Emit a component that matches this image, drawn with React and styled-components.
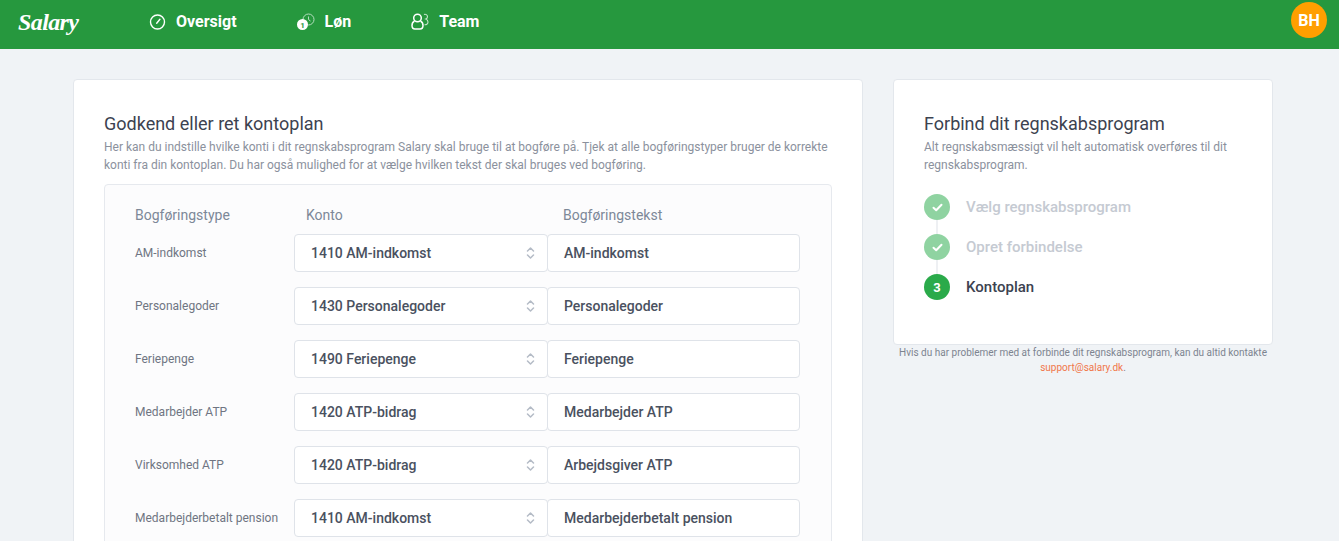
import React from 'react';
import styled, { createGlobalStyle } from 'styled-components';

const GlobalStyle = createGlobalStyle`
  html, body {
    margin: 0;
    height: 541px;
    overflow: hidden;
    background: #f0f3f6;
    font-family: Roboto, "Liberation Sans", sans-serif;
    color: #363c4a;
  }
  * { box-sizing: border-box; }
`;

const TopBar = styled.header`
  height: 49px;
  background: #26983e;
  display: flex;
  align-items: center;
  padding: 0 12px 6px 18px;
`;

const Logo = styled.div`
  width: 131px;
  color: #fff;
  font-family: "Liberation Serif", serif;
  font-style: italic;
  font-weight: 700;
  font-size: 24px;
  line-height: 42px;
  letter-spacing: -0.6px;
`;

const Nav = styled.nav`
  display: flex;
  flex: 1;
  gap: 60px;
`;

const NavItem = styled.a`
  display: flex;
  align-items: center;
  gap: 10px;
  color: #fff;
  font-size: 16px;
  font-weight: 700;
  line-height: 20px;
  svg { display: block; }
`;

const Avatar = styled.div`
  width: 36px;
  height: 36px;
  margin-top: -3px;
  border-radius: 50%;
  background: #ff9f00;
  color: #fff;
  font-size: 16px;
  font-weight: 700;
  display: flex;
  align-items: center;
  justify-content: center;
`;

const Content = styled.main`
  display: flex;
  align-items: flex-start;
  gap: 30px;
  padding: 30px 66px 0 73px;
`;

const Card = styled.section`
  background: #fff;
  border: 1px solid #e3e7ec;
  border-radius: 4px;
  padding: 30px;
`;

const MainCard = styled(Card)`
  width: 790px;
  height: 600px;
`;

const Side = styled.aside`
  width: 380px;
`;

const SideCard = styled(Card)`
  height: 266px;
`;

const Title = styled.h2`
  margin: 0;
  font-size: 18px;
  font-weight: 400;
  line-height: 28px;
  color: #3c4250;
`;

const Lead = styled.p`
  margin: 0;
  font-size: 12px;
  line-height: 18px;
  color: #8b919d;
`;

const Panel = styled.div`
  margin: 10px 0 0;
  width: 728px;
  min-height: 420px;
  background: #fcfcfd;
  border: 1px solid #e6e9ee;
  border-radius: 4px;
  padding: 20px 31px 0 30px;
`;

const Grid = styled.div`
  display: grid;
  grid-template-columns: 159px 253px 253px;
  row-gap: 15px;
`;

const HeadCell = styled.div`
  font-size: 14px;
  line-height: 20px;
  color: #7d8898;
  padding-left: ${p => p.$indent || 0}px;
  margin-bottom: -6px;
`;

const RowLabel = styled.div`
  display: flex;
  align-items: center;
  font-size: 12px;
  color: #6f7582;
`;

const Field = styled.div`
  height: 38px;
  background: #fff;
  border: 1px solid #dfe3e9;
  border-radius: 4px;
  display: flex;
  align-items: center;
  justify-content: space-between;
  font-size: 14px;
  font-weight: 500;
  color: #4a5160;
`;

const SelectField = styled(Field)`
  margin-right: -1px;
  padding: 0 12px 1px 16px;
`;

const TextField = styled(Field)`
  padding: 0 12px 0 16px;
`;

const Steps = styled.ol`
  list-style: none;
  margin: 20px 0 0;
  padding: 0;
  display: flex;
  flex-direction: column;
  gap: 14px;
`;

const Step = styled.li`
  position: relative;
  display: flex;
  align-items: center;
  gap: 16px;
  font-size: 15px;
  font-weight: 500;
  color: ${p => (p.$done ? '#c5cad2' : '#3c4250')};
  &:not(:last-child)::after {
    content: '';
    position: absolute;
    left: 12px;
    top: 26px;
    width: 2px;
    height: 14px;
    background: #eef0f3;
  }
`;

const StepDot = styled.span`
  width: 26px;
  height: 26px;
  border-radius: 50%;
  background: ${p => (p.$done ? '#8fd3a1' : '#2aaa4a')};
  color: #fff;
  font-size: 13px;
  font-weight: 700;
  display: flex;
  align-items: center;
  justify-content: center;
`;

const Help = styled.p`
  margin: 0;
  font-size: 10px;
  line-height: 15px;
  text-align: center;
  color: #7d8490;
`;

const HelpLink = styled.a`
  color: #f0774a;
`;

const GaugeIcon = () => (
  <svg width="17" height="16" viewBox="0 0 17 16" fill="none" stroke="#fff" strokeWidth="1.4">
    <circle cx="8.500" cy="8" r="7" />
    <path d="M7.700 9.200 10.900 5.200" strokeLinecap="round" />
  </svg>
);

const PayIcon = () => (
  <svg width="18" height="18" viewBox="0 0 18 18" fill="none">
    <circle cx="11.500" cy="6.500" r="5.500" stroke="#b4deBe" strokeWidth="1" />
    <path d="M11.500 3.500v3l2 1.500" stroke="#b4deBe" strokeWidth="1" />
    <circle cx="5.500" cy="11.500" r="5.500" fill="#fff" />
    <text x="5.500" y="14.500" fontSize="8" fontWeight="700" textAnchor="middle" fill="#26983e" fontFamily="Roboto, sans-serif">1</text>
  </svg>
);

const TeamIcon = () => (
  <svg width="18" height="17" viewBox="0 0 18 17" fill="none" stroke="#fff" strokeWidth="1.500">
    <circle cx="6.500" cy="5" r="3.800" />
    <path d="M3.500 8C1.600 9 1 10.500 1 12.500c0 2 1.400 3.500 3 3.500h5c1.600 0 3-1.500 3-3.500 0-2-.6-3.500-2.500-4.500" />
    <path d="M13 1.500c1.500-.6 3.500.2 3.500 2.200 0 1.300-.8 2-1.700 2.300 1 .4 2.200 1.300 2.200 3 0 2-1.800 3-3.500 2.700" stroke="#c5e6cc" strokeWidth="1.100" />
  </svg>
);

const CheckIcon = () => (
  <svg width="11" height="9" viewBox="0 0 11 9" fill="none" stroke="#fff" strokeWidth="2" strokeLinecap="round" strokeLinejoin="round">
    <path d="M1.500 4.800 4.200 7.300 9.500 1.700" />
  </svg>
);

const SortIcon = () => (
  <svg width="9" height="12" viewBox="0 0 9 12" fill="none" stroke="#b4bbc6" strokeWidth="1.500" strokeLinecap="round" strokeLinejoin="round">
    <path d="M1.500 4 4.500 1 7.500 4" />
    <path d="M1.500 8 4.500 11 7.500 8" />
  </svg>
);

const rows = [
  ['AM-indkomst', '1410 AM-indkomst', 'AM-indkomst'],
  ['Personalegoder', '1430 Personalegoder', 'Personalegoder'],
  ['Feriepenge', '1490 Feriepenge', 'Feriepenge'],
  ['Medarbejder ATP', '1420 ATP-bidrag', 'Medarbejder ATP'],
  ['Virksomhed ATP', '1420 ATP-bidrag', 'Arbejdsgiver ATP'],
  ['Medarbejderbetalt pension', '1410 AM-indkomst', 'Medarbejderbetalt pension'],
];

const App = () => {
  return (
    <>
      <GlobalStyle />
      <TopBar>
        <Logo>Salary</Logo>
        <Nav>
          <NavItem><GaugeIcon />Oversigt</NavItem>
          <NavItem><PayIcon />Løn</NavItem>
          <NavItem><TeamIcon />Team</NavItem>
        </Nav>
        <Avatar>BH</Avatar>
      </TopBar>
      <Content>
        <MainCard>
          <Title>Godkend eller ret kontoplan</Title>
          <Lead>
            Her kan du indstille hvilke konti i dit regnskabsprogram Salary skal bruge til at bogføre på. Tjek at alle bogføringstyper bruger de korrekte konti fra din kontoplan. Du har også mulighed for at vælge hvilken tekst der skal bruges ved bogføring.
          </Lead>
          <Panel>
            <Grid>
              <HeadCell>Bogføringstype</HeadCell>
              <HeadCell $indent={12}>Konto</HeadCell>
              <HeadCell $indent={16}>Bogføringstekst</HeadCell>
              {rows.map(([label, account, text]) => (
                <React.Fragment key={label}>
                  <RowLabel>{label}</RowLabel>
                  <SelectField>{account}<SortIcon /></SelectField>
                  <TextField>{text}</TextField>
                </React.Fragment>
              ))}
            </Grid>
          </Panel>
        </MainCard>
        <Side>
          <SideCard>
            <Title>Forbind dit regnskabsprogram</Title>
            <Lead>Alt regnskabsmæssigt vil helt automatisk overføres til dit regnskabsprogram.</Lead>
            <Steps>
              <Step $done><StepDot $done><CheckIcon /></StepDot>Vælg regnskabsprogram</Step>
              <Step $done><StepDot $done><CheckIcon /></StepDot>Opret forbindelse</Step>
              <Step><StepDot>3</StepDot>Kontoplan</Step>
            </Steps>
          </SideCard>
          <Help>
            Hvis du har problemer med at forbinde dit regnskabsprogram, kan du altid kontakte <HelpLink>support@salary.dk</HelpLink>.
          </Help>
        </Side>
      </Content>
    </>
  );
};

export default App;
